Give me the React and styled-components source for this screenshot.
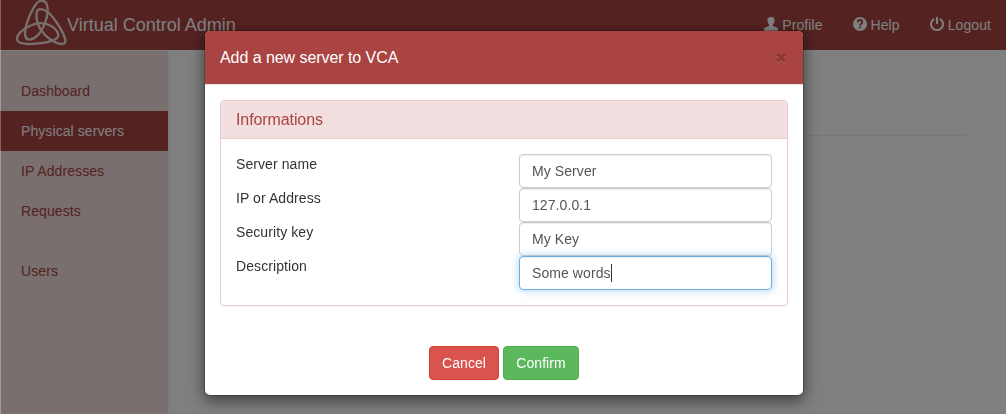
import React from "react";
import styled, { createGlobalStyle } from "styled-components";

const GlobalStyle = createGlobalStyle`
  * { box-sizing: border-box; }
  body {
    margin: 0;
    background: #fff;
    color: #333;
    font: 14px/20px "Liberation Sans", Arial, sans-serif;
    letter-spacing: 0.08px;
    overflow: hidden;
  }
`;

const Page = styled.div`
  height: 414px;
  display: flex;
  flex-direction: column;
`;

const Navbar = styled.header`
  height: 50px;
  flex: none;
  display: flex;
  align-items: center;
  justify-content: space-between;
  padding: 0 15px;
  background: #a94442;
  color: #fff;
`;

const Brand = styled.div`
  display: flex;
  align-items: center;
  height: 50px;
  font-size: 18px;
  letter-spacing: 0;
`;

const Logo = styled.svg`
  width: 52px;
  height: 50px;
  flex: none;
`;

const Links = styled.nav`
  display: flex;
  gap: 30px;
`;

const NavLink = styled.a`
  display: flex;
  gap: 4px;
  align-items: flex-start;
  color: #fff;
  svg { width: 14px; height: 14px; margin-top: 2px; }
`;

const Columns = styled.div`
  flex: 1;
  display: flex;
`;

const Sidebar = styled.aside`
  width: 169px;
  padding-top: 20px;
  background: #f2dede;
  border-top: 1px solid #fff;
  border-right: 1px solid #f4f4f4;
`;

const SideItem = styled.a`
  display: block;
  height: 40px;
  padding: 10px 0 10px 21px;
  margin-top: ${(p) => (p.$spaced ? "20px" : "0")};
  background: ${(p) => (p.$active ? "#a94442" : "transparent")};
  color: ${(p) => (p.$active ? "#fff" : "#a94442")};
`;

const Main = styled.main`
  flex: 1;
  padding: 85px 40px 0;
`;

const Rule = styled.div`
  height: 1px;
  background: #eee;
`;

const Backdrop = styled.div`
  position: fixed;
  inset: 0;
  display: flex;
  justify-content: center;
  align-items: flex-start;
  padding: 30px 0 0 2px;
  background: rgba(0, 0, 0, 0.5);
  box-shadow: inset 1px 0 0 rgba(255, 255, 255, 0.3);
`;

const Dialog = styled.section`
  width: 600px;
  height: 366px;
  display: flex;
  flex-direction: column;
  background: #fff;
  background-clip: padding-box;
  border: 1px solid rgba(0, 0, 0, 0.2);
  border-radius: 6px;
  box-shadow: 0 5px 15px rgba(0, 0, 0, 0.5);
`;

const DialogHeader = styled.div`
  height: 54px;
  display: flex;
  align-items: center;
  justify-content: space-between;
  padding: 0 15px;
  background: #a94442;
  border-bottom: 1px solid #e5e5e5;
  border-radius: 5px 5px 0 0;
  color: #fff;
  font-size: 16px;
  letter-spacing: -0.06px;
`;

const Close = styled.svg`
  width: 12px;
  height: 12px;
`;

const DialogBody = styled.div`
  padding: 15px 15px 0;
`;

const Panel = styled.div`
  height: 206px;
  border: 1px solid #ebccd1;
  border-radius: 4px;
  box-shadow: 0 1px 1px rgba(0, 0, 0, 0.05);
`;

const PanelHeading = styled.div`
  height: 38px;
  padding: 9px 15px;
  background: #f2dede;
  border-bottom: 1px solid #ebccd1;
  border-radius: 3px 3px 0 0;
  color: #a94442;
  font-size: 16px;
  letter-spacing: -0.1px;
`;

const Form = styled.div`
  padding: 15px;
`;

const Row = styled.div`
  display: grid;
  grid-template-columns: 283px 253px;
  height: 34px;
`;

const Label = styled.label`
  color: #333;
`;

const Field = styled.div`
  display: flex;
  align-items: center;
  height: 34px;
  padding: 0 12px;
  color: #555;
  background: #fff;
  border: 1px solid ${(p) => (p.$focused ? "#66afe9" : "#ccc")};
  border-radius: 4px;
  box-shadow: inset 0 1px 1px rgba(0, 0, 0, 0.075)
    ${(p) => (p.$focused ? ", 0 0 8px rgba(102, 175, 233, 0.6)" : "")};
`;

const Caret = styled.span`
  width: 1px;
  height: 18px;
  background: #333;
`;

const Actions = styled.div`
  display: flex;
  justify-content: center;
  gap: 4px;
  margin-top: 40px;
`;

const Button = styled.button`
  width: ${(p) => p.$width};
  height: 34px;
  padding: 0;
  border: 1px solid ${(p) => (p.$danger ? "#d43f3a" : "#4cae4c")};
  border-radius: 4px;
  background: ${(p) => (p.$danger ? "#d9534f" : "#5cb85c")};
  color: #fff;
  font: inherit;
  letter-spacing: inherit;
`;

const menu = [
  { label: "Dashboard" },
  { label: "Physical servers", active: true },
  { label: "IP Addresses" },
  { label: "Requests" },
  { label: "Users", spaced: true },
];

const fields = [
  { label: "Server name", value: "My Server" },
  { label: "IP or Address", value: "127.0.0.1" },
  { label: "Security key", value: "My Key" },
  { label: "Description", value: "Some words", focused: true },
];

export default function App() {
  return (
    <>
      <GlobalStyle />
      <Page>
        <Navbar>
          <Brand>
            <Logo viewBox="45 0 156 150" fill="none" stroke="#f2dede" strokeWidth="7">
              <path d="M126 2C112 0 101 20 91 43C80 67 73 91 76 108C79 124 98 121 113 106C130 89 143 55 143 30C143 14 137 3 126 2Z" />
              <path d="M117 28C107 31 108 55 114 73C122 96 145 117 166 127C182 134 196 134 196 124C196 111 184 88 171 69C154 43 133 25 117 28Z" />
              <path d="M51 117C50 104 68 88 89 78C111 67 136 68 154 78C168 86 178 101 174 110C169 121 137 128 107 131C77 134 52 131 51 117Z" />
            </Logo>
            <span>Virtual Control Admin</span>
          </Brand>
          <Links>
            <NavLink>
              <svg viewBox="0 0 14 14" fill="currentColor">
                <path d="M7 0C4.4 0 3.3 1.4 3.4 3.4C3.5 5.3 4.3 6.6 5 7.2V9L1.2 10.6C.3 11 0 12 0 14H14C14 12 13.7 11 12.8 10.6L9 9V7.2C9.7 6.6 10.5 5.3 10.6 3.4C10.7 1.4 9.6 0 7 0Z" />
              </svg>
              Profile
            </NavLink>
            <NavLink>
              <svg viewBox="0 0 14 14">
                <circle cx="7" cy="7" r="7" fill="#fff" />
                <path d="M4.8 5.3C4.8 2.3 9.3 2.3 9.3 5C9.3 6.7 7.1 6.6 7.1 8.5M7.1 9.5V11.3" fill="none" stroke="#a94442" strokeWidth="1.9" />
              </svg>
              Help
            </NavLink>
            <NavLink>
              <svg viewBox="0 0 14 14" fill="none" stroke="currentColor" strokeWidth="2">
                <path d="M4.2 1.8A6 6 0 1 0 9.8 1.8M7 0V7" />
              </svg>
              Logout
            </NavLink>
          </Links>
        </Navbar>
        <Columns>
          <Sidebar>
            {menu.map((m) => (
              <SideItem key={m.label} $active={m.active} $spaced={m.spaced}>
                {m.label}
              </SideItem>
            ))}
          </Sidebar>
          <Main>
            <Rule />
          </Main>
        </Columns>
      </Page>
      <Backdrop>
        <Dialog>
          <DialogHeader>
            <span>Add a new server to VCA</span>
            <Close viewBox="0 0 12 12" fill="none" strokeWidth="2.6">
              <path d="M1.5 3L9 10.5M9 3L1.5 10.5" stroke="#b55f5d" />
              <path d="M1.5 2L9 9.5M9 2L1.5 9.5" stroke="#873635" />
            </Close>
          </DialogHeader>
          <DialogBody>
            <Panel>
              <PanelHeading>Informations</PanelHeading>
              <Form>
                {fields.map((f) => (
                  <Row key={f.label}>
                    <Label>{f.label}</Label>
                    <Field $focused={f.focused}>
                      {f.value}
                      {f.focused && <Caret />}
                    </Field>
                  </Row>
                ))}
              </Form>
            </Panel>
            <Actions>
              <Button $danger $width="70px">Cancel</Button>
              <Button $width="76px">Confirm</Button>
            </Actions>
          </DialogBody>
        </Dialog>
      </Backdrop>
    </>
  );
}
